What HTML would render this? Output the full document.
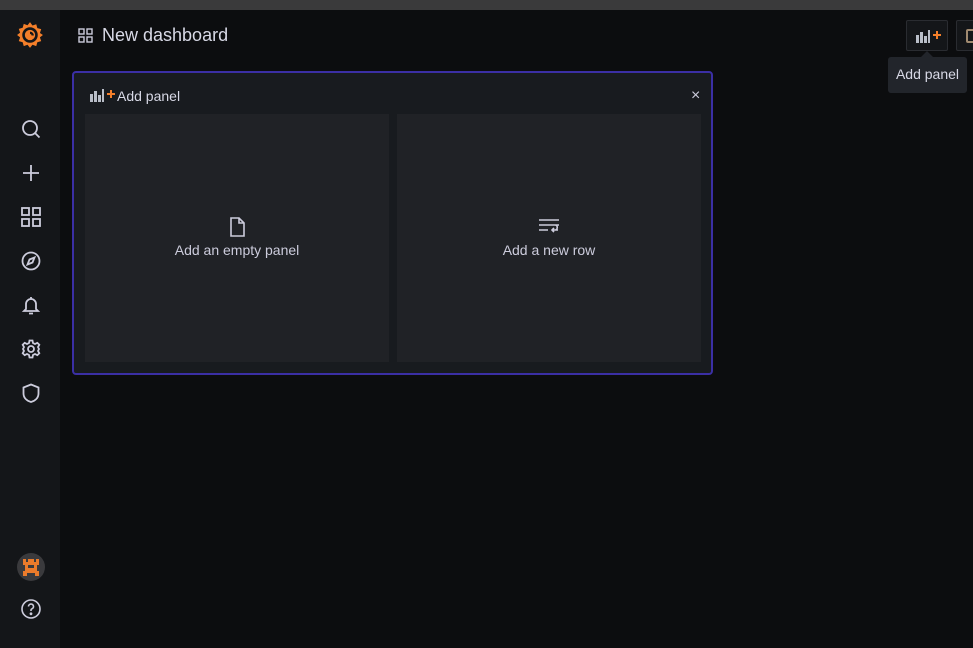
<!DOCTYPE html>
<html><head><style>
*{margin:0;padding:0;box-sizing:border-box}
body{width:973px;height:648px;overflow:hidden;background:#0c0d0f;font-family:"Liberation Sans",sans-serif;position:relative;color:#ccccdc}
.top{position:absolute;left:0;top:0;width:973px;height:10px;background:#3a3a3b}
.side{position:absolute;left:0;top:10px;width:60px;height:638px;background:#141619}
.ic{position:absolute;left:20px;width:22px;height:22px}
svg{display:block}
.title{position:absolute;left:102px;top:25px;font-size:18px;color:#d8d9e6}
.panel{position:absolute;left:72px;top:71px;width:641px;height:304px;border:2px solid #3b2fa5;border-radius:4px;background:#181b1f}
.card{position:absolute;top:41px;width:304px;height:248px;background:#202226;font-size:14px;text-align:center;color:#ccccdc}
.btn{position:absolute;left:906px;top:20px;width:42px;height:31px;border:1px solid #2a2c31;border-radius:2px;background:#141619}
.btn2{position:absolute;left:956px;top:20px;width:30px;height:31px;border:1px solid #2a2c31;border-radius:2px;background:#141619}
.tip{position:absolute;left:888px;top:57px;width:79px;height:36px;background:#22252b;border-radius:3px;font-size:14px;color:#d8d9e6;line-height:34px;text-align:center}
.tip:before{content:"";position:absolute;left:33px;top:-6px;border:6px solid transparent;border-top:0;border-bottom-color:#22252b}
</style></head><body>
<div class="top"></div>
<div class="side">
<svg style="position:absolute;left:16px;top:11px" width="28" height="28" viewBox="0 0 26 26"><path d="M13 1l2.3 3.2 3.5-1.2 1 3.6 3.6 1-1.2 3.5L25 13l-2.8 2.2 1.2 3.5-3.6 1-1 3.6-3.5-1.2L13 25l-2.3-2.9-3.5 1.2-1-3.6-3.6-1 1.2-3.5L1 13l2.8-2.2-1.2-3.5 3.6-1 1-3.6 3.5 1.2z" fill="#f47f2a"/><circle cx="13" cy="13" r="6" fill="none" stroke="#141619" stroke-width="2.4"/><path d="M13 11a2.5 2.5 0 0 1 2.5 2.5" stroke="#141619" stroke-width="2.2" fill="none"/></svg>
<svg class="ic" style="top:108px" viewBox="0 0 22 22" fill="none" stroke="#ccccdc" stroke-width="1.8"><circle cx="10" cy="10" r="7"/><path d="M15 15l4.5 4.5"/></svg>
<svg class="ic" style="top:152px" viewBox="0 0 22 22" fill="none" stroke="#ccccdc" stroke-width="1.8"><path d="M11 3v16M3 11h16"/></svg>
<svg class="ic" style="top:196px" viewBox="0 0 22 22" fill="none" stroke="#ccccdc" stroke-width="1.8"><rect x="2" y="2" width="7" height="7"/><rect x="13" y="2" width="7" height="7"/><rect x="2" y="13" width="7" height="7"/><rect x="13" y="13" width="7" height="7"/></svg>
<svg class="ic" style="top:240px" viewBox="0 0 22 22" fill="none" stroke="#ccccdc" stroke-width="1.8"><circle cx="11" cy="11" r="8.5"/><path d="M14.5 7.5l-2 5-5 2 2-5z"/></svg>
<svg class="ic" style="top:284px" viewBox="0 0 22 22" fill="none" stroke="#ccccdc" stroke-width="1.8"><path d="M6 15V10a5 5 0 0 1 10 0v5l2 2H4zM9 19.5h4M11 3v2"/></svg>
<svg class="ic" style="top:328px" viewBox="0 0 22 22" fill="none" stroke="#ccccdc" stroke-width="1.8"><circle cx="11" cy="11" r="3"/><path d="M9.5 2.5h3l.5 2.5 2 1 2.3-1.2 2 2L18 9l1 2-1 2 1.3 2.2-2 2L15 16l-2 1-.5 2.5h-3L9 17l-2-1-2.3 1.2-2-2L4 13l-1-2 1-2-1.3-2.2 2-2L7 6l2-1z"/></svg>
<svg class="ic" style="top:372px" viewBox="0 0 22 22" fill="none" stroke="#ccccdc" stroke-width="1.8"><path d="M11 2.5l7.5 3v6c0 4.5-3.5 7.5-7.5 8.5-4-1-7.5-4-7.5-8.5v-6z"/></svg>
<svg style="position:absolute;left:17px;top:543px" width="28" height="28" viewBox="0 0 28 28"><circle cx="14" cy="14" r="14" fill="#3a3a3d"/><path d="M6 6h3v3h2V6h6v3h2V6h3v6h-2v6h2v5h-4v-3H10v3H6v-5h2v-6H6z M11 12v3h6v-3z" fill="#eb7b2b"/></svg>
<svg class="ic" style="top:588px" viewBox="0 0 22 22" fill="none" stroke="#ccccdc" stroke-width="1.6"><circle cx="11" cy="11" r="9"/><path d="M8.5 8.5a2.5 2.5 0 1 1 3.5 2.3c-.7.3-1 .8-1 1.5v.7"/><circle cx="11" cy="15.8" r=".6" fill="#ccccdc"/></svg>
</div>
<svg style="position:absolute;left:78px;top:28px" width="15" height="15" viewBox="0 0 15 15" fill="none" stroke="#ccccdc" stroke-width="1.4"><rect x="1" y="1" width="5" height="5"/><rect x="9" y="1" width="5" height="5"/><rect x="1" y="9" width="5" height="5"/><rect x="9" y="9" width="5" height="5"/></svg>
<div class="title">New dashboard</div>
<div class="panel">
<svg style="position:absolute;left:15px;top:15px" width="28" height="14" viewBox="0 0 28 14"><path d="M1 6h3v8H1zM5 3h3v11H5zM9 7h3v7H9zM13 1h2v13h-2z" fill="#b9bec8"/><path d="M18 5h3V2h2v3h3v2h-3v3h-2V7h-3z" fill="#f47f2a"/></svg>
<div style="position:absolute;left:43px;top:15px;font-size:14px;color:#d8d9e6">Add panel</div>
<div style="position:absolute;left:617px;top:14px;font-size:16px;color:#ccccdc">×</div>
<div class="card" style="left:11px"><svg style="margin:103px auto 0" width="16" height="20" viewBox="0 0 16 20" fill="none" stroke="#ccccdc" stroke-width="1.6"><path d="M2 1h8l5 5v13H2zM10 1v5h5"/></svg><div style="margin-top:5px">Add an empty panel</div></div>
<div class="card" style="left:323px"><svg style="margin:104px auto 0" width="22" height="16" viewBox="0 0 22 16" fill="none" stroke="#ccccdc" stroke-width="1.6"><path d="M1 2h20M1 7h20M1 12h9M14 12h6M17 7c3 0 3 5 0 5M16 10l-2 2 2 2"/></svg><div style="margin-top:8px">Add a new row</div></div>
</div>
<div class="btn"><svg style="position:absolute;left:8px;top:8px" width="28" height="14" viewBox="0 0 28 14"><path d="M1 6h3v8H1zM5 3h3v11H5zM9 7h3v7H9zM13 1h2v13h-2z" fill="#b9bec8"/><path d="M18 5h3V2h2v3h3v2h-3v3h-2V7h-3z" fill="#f47f2a"/></svg></div>
<div class="btn2"><div style="position:absolute;left:9px;top:8px;width:10px;height:14px;border:2px solid #a08a70;border-radius:2px"></div></div>
<div class="tip">Add panel</div>
</body></html>
